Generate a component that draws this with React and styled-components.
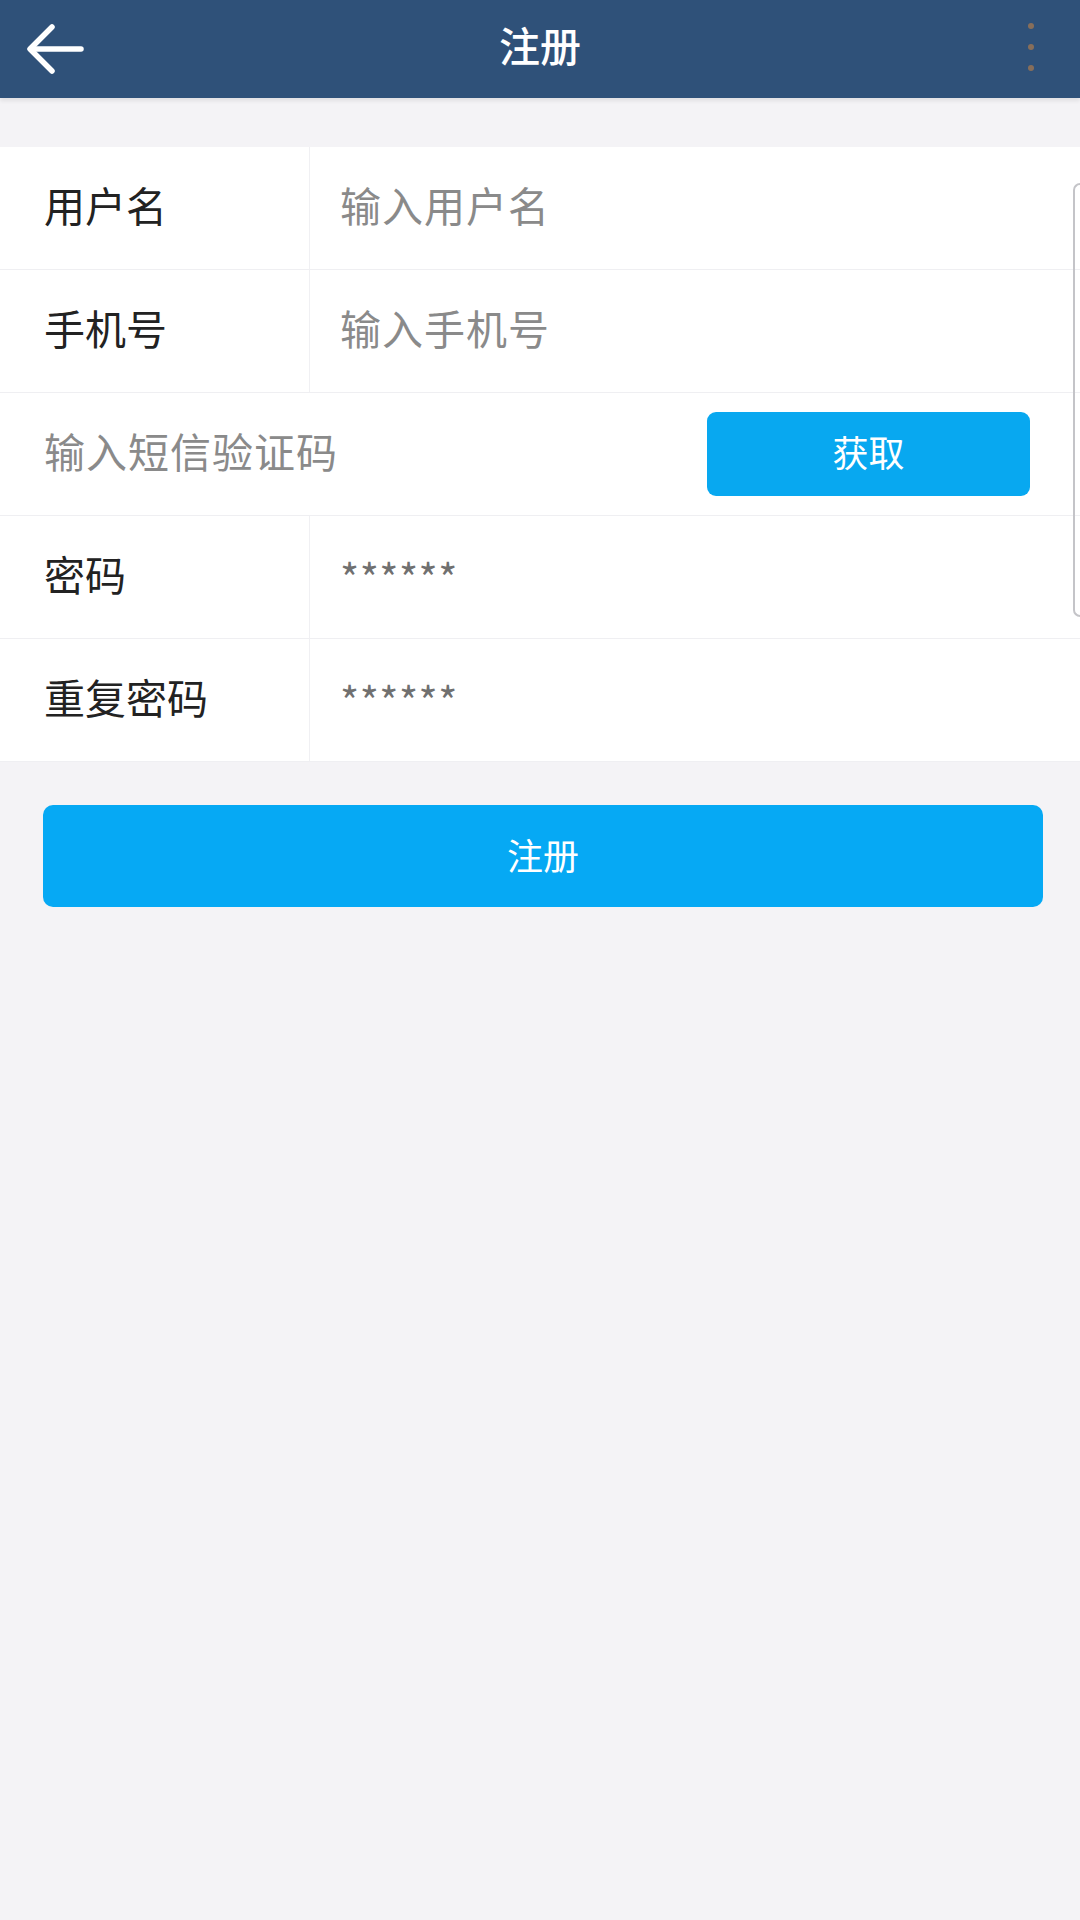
import React from "react";
import styled, { createGlobalStyle } from "styled-components";

const Global = createGlobalStyle`
  html, body { margin: 0; padding: 0; }
  body {
    background: #f4f3f6;
    font-family: "Noto Sans CJK SC", "Noto Sans", sans-serif;
  }
`;

const Page = styled.div`
  position: relative;
  width: 1080px;
  min-height: 1920px;
  background: #f4f3f6;
`;

const Header = styled.header`
  height: 98px;
  background: #2f5179;
  display: grid;
  grid-template-columns: 110px 1fr 110px;
  align-items: center;
  box-shadow: 0 3px 4px rgba(0, 0, 0, 0.08);
`;

const BackBtn = styled.div`
  display: flex;
  align-items: center;
  padding-left: 24px;
  height: 98px;
`;

const Title = styled.h1`
  margin: 0;
  text-align: center;
  color: #fff;
  font-size: 41px;
  font-weight: 500;
  line-height: 1;
  padding-bottom: 9px;
`;

const Dots = styled.div`
  justify-self: end;
  margin-right: 46px;
  display: flex;
  flex-direction: column;
  gap: 15px;
  padding-bottom: 4px;
`;

const Dot = styled.span`
  width: 6px;
  height: 6px;
  border-radius: 50%;
  background: rgba(165, 120, 80, 0.75);
`;

const Form = styled.div`
  margin-top: 49px;
  background: #fff;
`;

const Row = styled.div`
  display: flex;
  align-items: stretch;
  height: 122px;
  border-bottom: 1px solid #efeff2;
`;

const Label = styled.div`
  width: 310px;
  box-sizing: border-box;
  padding-left: 44px;
  padding-bottom: 9px;
  border-right: 1px solid #f0f0f3;
  display: flex;
  align-items: center;
  font-size: 41px;
  color: #222;
`;

const Field = styled.div`
  flex: 1;
  display: flex;
  align-items: center;
  padding-left: 30px;
  padding-bottom: ${(p) => (p.$mask ? "3px" : "9px")};
  font-size: 41px;
  color: ${(p) => (p.$mask ? "#707070" : "#8a8a8a")};
  letter-spacing: ${(p) => (p.$mask ? "0.5px" : "1px")};
`;

const CodeRow = styled(Row)`
  justify-content: space-between;
  align-items: center;
  padding: 0 50px 0 44px;
`;

const CodeText = styled.span`
  font-size: 41px;
  color: #8a8a8a;
  letter-spacing: 1px;
  padding-bottom: 9px;
`;

const GetBtn = styled.button`
  width: 323px;
  height: 84px;
  border: none;
  border-radius: 9px;
  background: #08a8f0;
  color: #fff;
  font-family: inherit;
  font-size: 36px;
  padding: 0 0 6px;
`;

const Submit = styled.button`
  display: block;
  margin: 43px 37px 0 43px;
  width: 1000px;
  height: 102px;
  border: none;
  border-radius: 10px;
  background: #06a9f4;
  color: #fff;
  font-family: inherit;
  font-size: 36px;
  padding: 0 0 5px;
`;

const EdgeHandle = styled.div`
  position: absolute;
  right: 0;
  top: 183px;
  width: 5px;
  height: 430px;
  border: 2px solid #c4c4c8;
  border-right: none;
  border-radius: 12px 0 0 12px;
`;

const rows = [
  { label: "用户名", value: "输入用户名" },
  { label: "手机号", value: "输入手机号" },
];

export default function App() {
  return (
    <Page>
      <Global />
      <Header>
        <BackBtn>
          <svg width="60" height="52" viewBox="0 0 60 52">
            <g stroke="#fff" strokeWidth="5.5" strokeLinecap="round" strokeLinejoin="round" fill="none">
              <line x1="7" y1="26" x2="57" y2="26" />
              <polyline points="28,4 6,26 28,48" />
            </g>
          </svg>
        </BackBtn>
        <Title>注册</Title>
        <Dots>
          <Dot />
          <Dot />
          <Dot />
        </Dots>
      </Header>
      <Form>
        {rows.map((r) => (
          <Row key={r.label}>
            <Label>{r.label}</Label>
            <Field>{r.value}</Field>
          </Row>
        ))}
        <CodeRow>
          <CodeText>输入短信验证码</CodeText>
          <GetBtn>获取</GetBtn>
        </CodeRow>
        <Row>
          <Label>密码</Label>
          <Field $mask>******</Field>
        </Row>
        <Row>
          <Label>重复密码</Label>
          <Field $mask>******</Field>
        </Row>
      </Form>
      <Submit>注册</Submit>
      <EdgeHandle />
    </Page>
  );
}
